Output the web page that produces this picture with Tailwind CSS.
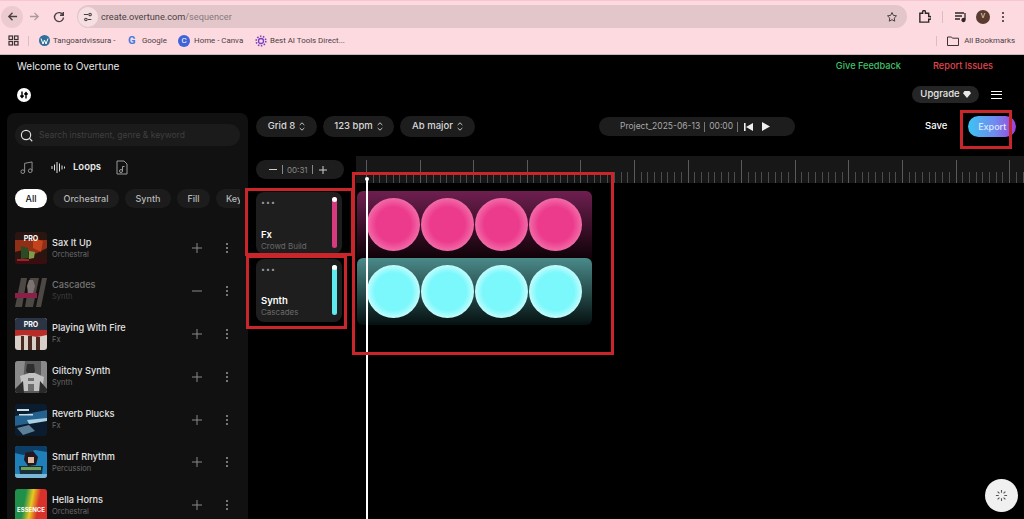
<!doctype html>
<html lang="en">
  <head>
    <title>Overtune sequencer</title>
    <meta charset="UTF-8" />
    <meta name="viewport" content="width=device-width, initial-scale=1" />
    <script src="https://cdn.jsdelivr.net/npm/@tailwindcss/browser@4"></script>
  </head>
  <body class="bg-black">
    <div class="relative w-[1024px] h-[519px] overflow-hidden bg-black text-white font-['Inter',sans-serif]">
      <!-- browser chrome -->
      <div class="h-[55px] bg-[#fddae0] border-t border-b border-t-[#f9c5d1] border-b-[#c9b4b8] font-['Roboto',sans-serif] text-[#4a4044]">
        <div class="h-[31px] flex items-center">
          <div class="ml-[1px] w-[22px] h-[22px] rounded-full bg-[#eccbd0] flex items-center justify-center">
            <svg class="w-[11px] h-[11px]" viewBox="0 0 12 12" fill="none" stroke="#4a4044" stroke-width="1.5"><path d="M11 6H2M6 2 2 6l4 4"/></svg>
          </div>
          <svg class="ml-[6px] w-[11px] h-[11px]" viewBox="0 0 12 12" fill="none" stroke="#a89a9e" stroke-width="1.4"><path d="M1 6h9M6 2l4 4-4 4"/></svg>
          <svg class="ml-[13px] w-[12px] h-[12px]" viewBox="0 0 12 12" fill="none" stroke="#4a4044" stroke-width="1.4"><path d="M10 4a4.500 4.500 0 1 0 .5 2.500M10.300 1v3.300H7"/></svg>
          <div class="ml-[12px] w-[830px] h-[23px] rounded-full bg-[#e3c6ca] flex items-center">
            <div class="ml-[1px] w-[20px] h-[20px] rounded-full bg-[#f5dfe2] flex items-center justify-center">
              <svg class="w-[10px] h-[10px]" viewBox="0 0 12 12" fill="none" stroke="#4a4044" stroke-width="1.300"><path d="M1 3h5M10 9H6"/><circle cx="8.500" cy="3" r="1.500"/><circle cx="3.500" cy="9" r="1.500"/></svg>
            </div>
            <span class="ml-[3px] text-[9.200px]">create.overtune.com<span class="text-[#85797d]">/sequencer</span></span>
            <svg class="ml-auto mr-[9px] w-[12px] h-[12px]" viewBox="0 0 24 24" fill="none" stroke="#4a4044" stroke-width="2"><path d="m12 3 2.800 5.800 6.200.9-4.500 4.400 1 6.300L12 17.400l-5.500 3 1-6.300L3 9.700l6.200-.9z"/></svg>
          </div>
          <svg class="ml-[11px] w-[13px] h-[13px]" viewBox="0 0 14 14" fill="none" stroke="#2c2629" stroke-width="1.500"><path d="M2 3.500h3V2a1.200 1.200 0 0 1 3 0v1.500h3.500V7H13a1.500 1.500 0 0 1 0 3h-1.500v3H2z"/></svg>
          <div class="ml-[11px] w-px h-[12px] bg-[#dcbcc2]"></div>
          <svg class="ml-[12px] w-[12px] h-[12px]" viewBox="0 0 12 12" fill="none" stroke="#2c2629" stroke-width="1.300"><path d="M0 2h9M0 5h7M0 8h5"/><path d="M10 2v6.500" /><circle cx="8.500" cy="9" r="1.500" fill="#2c2629"/></svg>
          <div class="ml-[9px] w-[14px] h-[14px] rounded-full bg-[#5b3a2e] text-[7px] text-[#f0e0d8] flex items-center justify-center">V</div>
          <div class="ml-[12px] flex flex-col gap-[2px]">
            <div class="w-[2px] h-[2px] rounded-full bg-[#2c2629]"></div>
            <div class="w-[2px] h-[2px] rounded-full bg-[#2c2629]"></div>
            <div class="w-[2px] h-[2px] rounded-full bg-[#2c2629]"></div>
          </div>
        </div>
        <div class="h-[22px] flex items-center text-[7.900px] pb-[5px]">
          <svg class="ml-[8px] w-[11px] h-[11px]" viewBox="0 0 11 11" fill="none" stroke="#3a3336" stroke-width="1.200"><rect x="1" y="1" width="3.500" height="3.500"/><rect x="6.500" y="1" width="3.500" height="3.500"/><rect x="1" y="6.500" width="3.500" height="3.500"/><rect x="6.500" y="6.500" width="3.500" height="3.500"/></svg>
          <div class="ml-[9px] w-px h-[10px] bg-[#dcbcc2]"></div>
          <svg class="ml-[10px] w-[11px] h-[11px]" viewBox="0 0 11 11"><circle cx="5.500" cy="5.500" r="5.500" fill="#2f6f9b"/><path d="M2 3.500 4 9l1.500-4L7 9l2-5.500" fill="none" stroke="#fff" stroke-width="1"/></svg>
          <span class="ml-[3px] w-[64px] whitespace-nowrap">Tangoardvissura -</span>
          <span class="ml-[11px] w-[10px] text-[11px] font-bold text-[#3f7de0] leading-none">G</span>
          <span class="ml-[4px] w-[27px]">Google</span>
          <div class="ml-[9px] w-[12px] h-[12px] rounded-full bg-[#3f63d8] text-[8px] text-white flex items-center justify-center">C</div>
          <span class="ml-[4px] w-[50px] whitespace-nowrap">Home - Canva</span>
          <svg class="ml-[11px] w-[12px] h-[12px]" viewBox="0 0 12 12" fill="none" stroke="#7a3fc0"><circle cx="6" cy="6" r="2.500" stroke-width="1.300"/><circle cx="6" cy="6" r="4.800" stroke-width="1.600" stroke-dasharray="1.500 1.500"/></svg>
          <span class="ml-[3px]">Best AI Tools Direct...</span>
          <div class="ml-auto w-px h-[10px] bg-[#dcbcc2]"></div>
          <svg class="ml-[10px] w-[12px] h-[10px]" viewBox="0 0 12 10" fill="none" stroke="#3a3336"><path d="M.500 1h4l1 1.200h6v7.300H.500z"/></svg>
          <span class="ml-[5px] mr-[9px]">All Bookmarks</span>
        </div>
      </div>

      <!-- page header -->
      <div class="h-[22px] flex items-center text-[9.200px] font-medium">
        <span class="ml-[17px] text-[10px] text-[#e8e8e8] font-normal">Welcome to Overtune</span>
        <span class="ml-auto text-[#3fc46b]">Give Feedback</span>
        <span class="ml-[32px] mr-[31px] text-[#e0474f]">Report Issues</span>
      </div>
      <div class="h-[35px] flex items-center">
        <svg class="ml-[17px] w-[14px] h-[14px]" viewBox="0 0 14 14"><circle cx="7" cy="7" r="7" fill="#fff"/><path d="M5 3.500v6M3.400 7.500 5 9.500l1.600-2M9 10.500v-6M7.400 6.500 9 4.500l1.600 2" fill="none" stroke="#000" stroke-width="1.400"/></svg>
        <div class="ml-auto h-[17px] w-[67px] rounded-full bg-[#252525] flex items-center justify-center gap-[3px] text-[9.500px] font-medium text-[#e8e8e8]">
          Upgrade
          <svg class="w-[8px] h-[7px]" viewBox="0 0 8 7" fill="#e8e8e8"><path d="M1.500 0h5L8 2.200 4 7 0 2.200z"/></svg>
        </div>
        <div class="ml-[12px] mr-[22px] w-[11px] flex flex-col gap-[2.500px]">
          <div class="h-px bg-white"></div>
          <div class="h-px bg-white"></div>
          <div class="h-px bg-white"></div>
        </div>
      </div>

      <div class="flex mt-[1px]">
        <!-- sidebar -->
        <aside class="ml-[7px] w-[241px] h-[420px] rounded-t-lg bg-[#111111] px-[8px] pt-[11px] shrink-0">
          <div class="h-[22px] rounded-full bg-[#1b1b1b] flex items-center">
            <svg class="ml-[5px] w-[13px] h-[13px]" viewBox="0 0 14 14" fill="none" stroke="#e5e5e5" stroke-width="1.200"><circle cx="6.500" cy="6.500" r="5"/><path d="m10.200 10.200 3 3"/></svg>
            <span class="ml-[6px] text-[8.500px] text-[#3f3f3f]">Search instrument, genre &amp; keyword</span>
          </div>
          <div class="h-[20px] mt-[11px] flex items-center text-[9.500px] font-semibold text-[#e8e8e8]">
            <svg class="ml-[5px] w-[13px] h-[13px]" viewBox="0 0 14 14" fill="none" stroke="#9a9a9a" stroke-width="1"><circle cx="3" cy="11.500" r="2"/><circle cx="11" cy="10.500" r="2"/><path d="M5 11.500V2.500L13 1v9.500"/></svg>
            <svg class="ml-[18px] w-[15px] h-[13px]" viewBox="0 0 15 13" stroke="#e0e0e0" stroke-width="1"><path d="M1 5v3M3.500 3.500v6M6 1v11M8.500 2.500v8M11 4.500v4M13.500 5.500v2"/></svg>
            <span class="ml-[7px]">Loops</span>
            <svg class="ml-[15px] w-[12px] h-[15px]" viewBox="0 0 12 15" fill="none" stroke="#9a9a9a" stroke-width="1"><path d="M1 1h7l3 3v10H1z"/><circle cx="5" cy="11" r="1.500"/><path d="M6.500 11V6.500h2"/></svg>
          </div>
          <div class="mt-[12px] flex gap-[6px] overflow-hidden text-[9px] font-medium h-[19px] items-stretch w-[225px]">
            <div class="w-[32px] rounded-full bg-white text-[#111] flex items-center justify-center shrink-0">All</div>
            <div class="w-[66px] rounded-full bg-[#1c1c1c] text-[#b8b8b8] flex items-center justify-center shrink-0">Orchestral</div>
            <div class="w-[46px] rounded-full bg-[#1c1c1c] text-[#b8b8b8] flex items-center justify-center shrink-0">Synth</div>
            <div class="w-[33px] rounded-full bg-[#1c1c1c] text-[#b8b8b8] flex items-center justify-center shrink-0">Fill</div>
            <div class="w-[50px] rounded-full bg-[#1c1c1c] text-[#b8b8b8] pl-[10px] flex items-center shrink-0">Keys</div>
          </div>

          <div class="mt-[24px] flex flex-col gap-[10.900px]">
            <div class="h-[32px] flex items-center">
              <div class="relative w-[32px] h-[32px] rounded-[3px] overflow-hidden shrink-0">
                <svg class="w-full h-full" viewBox="0 0 32 32"><rect width="32" height="32" fill="#2a1510"/><path d="M0 8h32v8L20 22 8 18 0 20z" fill="#8e2f16"/><path d="M18 6l10 3-2 11-8-4z" fill="#c2431c"/><path d="M6 14l7 2 1 10-8 1z" fill="#2c4a24"/><path d="M14 19l6 1-1 6-5 1z" fill="#7f9a4a"/><path d="M0 27h32v5H0z" fill="#3a0d10"/><path d="M2 27h12v2H2z" fill="#a3202a"/></svg>
                <span class="absolute inset-x-0 top-[2px] text-center text-[7px] font-bold text-white">PRO</span>
              </div>
              <div class="ml-[5px] flex flex-col gap-[2px]">
                <span class="text-[9.200px] leading-[11px] font-medium text-[#e5e5e5]">Sax It Up</span>
                <span class="text-[7.500px] leading-[10px] text-[#6a6a6a]">Orchestral</span>
              </div>
              <svg class="ml-auto w-[10px] h-[10px]" viewBox="0 0 10 10" stroke="#8a8a8a"><path d="M5 0v10M0 5h10"/></svg>
              <div class="ml-[24px] mr-[12px] flex flex-col gap-[2px]">
                <div class="w-[2px] h-[2px] bg-[#9a9a9a] rounded-full"></div><div class="w-[2px] h-[2px] bg-[#9a9a9a] rounded-full"></div><div class="w-[2px] h-[2px] bg-[#9a9a9a] rounded-full"></div>
              </div>
            </div>
            <div class="h-[32px] flex items-center">
              <div class="w-[32px] h-[32px] overflow-hidden shrink-0">
                <svg class="w-full h-full" viewBox="0 0 32 32"><path d="M6 3h26l-6 29H0z" fill="#4e4845"/><path d="M12 3l-5 29h3L15 3zM24 3l-6 29h3L27 3z" fill="#111"/><path d="M14 5l4 0 2 6-2 7h-5l-1-7z" fill="#7a7370"/><path d="M0 18h22v5H0z" fill="#8c1f48"/></svg>
              </div>
              <div class="ml-[5px] flex flex-col gap-[2px]">
                <span class="text-[9.200px] leading-[11px] font-medium text-[#757575]">Cascades</span>
                <span class="text-[7.500px] leading-[10px] text-[#3f3f3f]">Synth</span>
              </div>
              <svg class="ml-auto w-[10px] h-[10px]" viewBox="0 0 10 10" stroke="#8a8a8a"><path d="M0 5h10"/></svg>
              <div class="ml-[24px] mr-[12px] flex flex-col gap-[2px]">
                <div class="w-[2px] h-[2px] bg-[#9a9a9a] rounded-full"></div><div class="w-[2px] h-[2px] bg-[#9a9a9a] rounded-full"></div><div class="w-[2px] h-[2px] bg-[#9a9a9a] rounded-full"></div>
              </div>
            </div>
            <div class="h-[32px] flex items-center">
              <div class="relative w-[32px] h-[32px] rounded-[3px] overflow-hidden shrink-0">
                <svg class="w-full h-full" viewBox="0 0 32 32"><rect width="32" height="32" fill="#d8cfc8"/><path d="M0 0h32v12H0z" fill="#2a3444"/><path d="M0 12h32v5l-10 2-12-2-10 1z" fill="#b82c28"/><path d="M6 18h3v14H6zM13 18h4v14h-4zM21 19h4v13h-4z" fill="#4a2a20"/></svg>
                <span class="absolute inset-x-0 top-[2px] text-center text-[7px] font-bold text-white">PRO</span>
              </div>
              <div class="ml-[5px] flex flex-col gap-[2px]">
                <span class="text-[9.200px] leading-[11px] font-medium text-[#e5e5e5]">Playing With Fire</span>
                <span class="text-[7.500px] leading-[10px] text-[#6a6a6a]">Fx</span>
              </div>
              <svg class="ml-auto w-[10px] h-[10px]" viewBox="0 0 10 10" stroke="#8a8a8a"><path d="M5 0v10M0 5h10"/></svg>
              <div class="ml-[24px] mr-[12px] flex flex-col gap-[2px]">
                <div class="w-[2px] h-[2px] bg-[#9a9a9a] rounded-full"></div><div class="w-[2px] h-[2px] bg-[#9a9a9a] rounded-full"></div><div class="w-[2px] h-[2px] bg-[#9a9a9a] rounded-full"></div>
              </div>
            </div>
            <div class="h-[32px] flex items-center">
              <div class="w-[32px] h-[32px] rounded-[3px] overflow-hidden shrink-0">
                <svg class="w-full h-full" viewBox="0 0 32 32"><rect width="32" height="32" fill="#5a5a5a"/><path d="M0 0h10l-3 32H0zM26 0h6v32h-6z" fill="#8a8a8a"/><path d="M12 3h7l1 7-2 3h-5l-2-3z" fill="#2e2e2e"/><path d="M5 15l9-3h6l9 4-2 14H8z" fill="#c2c2c2"/><path d="M13 17h6v3h-6zM13 23h6v7h-6z" fill="#6e6e6e"/><path d="M0 28l8-8 1 12H0zM32 28l-7-8-1 12h8z" fill="#2a2a2a"/></svg>
              </div>
              <div class="ml-[5px] flex flex-col gap-[2px]">
                <span class="text-[9.200px] leading-[11px] font-medium text-[#e5e5e5]">Glitchy Synth</span>
                <span class="text-[7.500px] leading-[10px] text-[#6a6a6a]">Synth</span>
              </div>
              <svg class="ml-auto w-[10px] h-[10px]" viewBox="0 0 10 10" stroke="#8a8a8a"><path d="M5 0v10M0 5h10"/></svg>
              <div class="ml-[24px] mr-[12px] flex flex-col gap-[2px]">
                <div class="w-[2px] h-[2px] bg-[#9a9a9a] rounded-full"></div><div class="w-[2px] h-[2px] bg-[#9a9a9a] rounded-full"></div><div class="w-[2px] h-[2px] bg-[#9a9a9a] rounded-full"></div>
              </div>
            </div>
            <div class="h-[32px] flex items-center">
              <div class="w-[32px] h-[32px] rounded-[3px] overflow-hidden shrink-0">
                <svg class="w-full h-full" viewBox="0 0 32 32"><rect width="32" height="32" fill="#0b1c2e"/><path d="M0 12 32 6v10L0 22z" fill="#25618e"/><path d="M2 5h12v2H2zM4 10h14v1.500H4z" fill="#c8dce8"/><path d="M12 16l20-2v3L14 20z" fill="#a8cfe2"/><path d="M2 24l12-3 6 6-12 4z" fill="#5a7f96"/></svg>
              </div>
              <div class="ml-[5px] flex flex-col gap-[2px]">
                <span class="text-[9.200px] leading-[11px] font-medium text-[#e5e5e5]">Reverb Plucks</span>
                <span class="text-[7.500px] leading-[10px] text-[#6a6a6a]">Fx</span>
              </div>
              <svg class="ml-auto w-[10px] h-[10px]" viewBox="0 0 10 10" stroke="#8a8a8a"><path d="M5 0v10M0 5h10"/></svg>
              <div class="ml-[24px] mr-[12px] flex flex-col gap-[2px]">
                <div class="w-[2px] h-[2px] bg-[#9a9a9a] rounded-full"></div><div class="w-[2px] h-[2px] bg-[#9a9a9a] rounded-full"></div><div class="w-[2px] h-[2px] bg-[#9a9a9a] rounded-full"></div>
              </div>
            </div>
            <div class="h-[32px] flex items-center">
              <div class="w-[32px] h-[32px] rounded-[3px] overflow-hidden shrink-0">
                <svg class="w-full h-full" viewBox="0 0 32 32"><rect width="32" height="32" fill="#1f7fb8"/><path d="M0 0h32v6L20 4 8 9 0 7z" fill="#0d3f66"/><path d="M10 7l8-2 5 6-2 8-8 1-4-6z" fill="#241820"/><path d="M13 11h6v6h-6z" fill="#e0b8a0"/><path d="M4 20h24l-1 8H5z" fill="#18303a"/><path d="M6 21h20v3H6z" fill="#6fa05a"/><path d="M0 28h32v4H0z" fill="#7ab8d8"/></svg>
              </div>
              <div class="ml-[5px] flex flex-col gap-[2px]">
                <span class="text-[9.200px] leading-[11px] font-medium text-[#e5e5e5]">Smurf Rhythm</span>
                <span class="text-[7.500px] leading-[10px] text-[#6a6a6a]">Percussion</span>
              </div>
              <svg class="ml-auto w-[10px] h-[10px]" viewBox="0 0 10 10" stroke="#8a8a8a"><path d="M5 0v10M0 5h10"/></svg>
              <div class="ml-[24px] mr-[12px] flex flex-col gap-[2px]">
                <div class="w-[2px] h-[2px] bg-[#9a9a9a] rounded-full"></div><div class="w-[2px] h-[2px] bg-[#9a9a9a] rounded-full"></div><div class="w-[2px] h-[2px] bg-[#9a9a9a] rounded-full"></div>
              </div>
            </div>
            <div class="h-[32px] flex items-center">
              <div class="w-[32px] h-[32px] rounded-[3px] overflow-hidden bg-[linear-gradient(100deg,#1f8f4a_30%,#e8c820_50%,#d8302a_70%)] shrink-0 flex flex-col items-center justify-end">
                <span class="mb-[7px] text-[6px] leading-[9px] font-bold text-white">ESSENCE</span>
              </div>
              <div class="ml-[5px] flex flex-col gap-[2px]">
                <span class="text-[9.200px] leading-[11px] font-medium text-[#e5e5e5]">Hella Horns</span>
                <span class="text-[7.500px] leading-[10px] text-[#6a6a6a]">Orchestral</span>
              </div>
              <svg class="ml-auto w-[10px] h-[10px]" viewBox="0 0 10 10" stroke="#8a8a8a"><path d="M5 0v10M0 5h10"/></svg>
              <div class="ml-[24px] mr-[12px] flex flex-col gap-[2px]">
                <div class="w-[2px] h-[2px] bg-[#9a9a9a] rounded-full"></div><div class="w-[2px] h-[2px] bg-[#9a9a9a] rounded-full"></div><div class="w-[2px] h-[2px] bg-[#9a9a9a] rounded-full"></div>
              </div>
            </div>
          </div>
        </aside>

        <!-- sequencer -->
        <main class="ml-[8px] flex-1 min-w-0">
          <div class="mt-[3px] h-[21px] flex items-center text-[9.500px] font-medium text-[#d8d8d8]">
            <div class="w-[61px] h-[21px] rounded-full bg-[#1d1d1d] flex items-center justify-center gap-[4px]">Grid 8
              <svg class="w-[6px] h-[9px]" viewBox="0 0 6 9" fill="none" stroke="#d8d8d8" stroke-width=".9"><path d="M.7 3 3 .8 5.300 3M.7 6 3 8.200 5.300 6"/></svg>
            </div>
            <div class="ml-[6px] w-[71px] h-[21px] rounded-full bg-[#1d1d1d] flex items-center justify-center gap-[4px]">123 bpm
              <svg class="w-[6px] h-[9px]" viewBox="0 0 6 9" fill="none" stroke="#d8d8d8" stroke-width=".9"><path d="M.7 3 3 .8 5.300 3M.7 6 3 8.200 5.300 6"/></svg>
            </div>
            <div class="ml-[6px] w-[75px] h-[21px] rounded-full bg-[#1d1d1d] flex items-center justify-center gap-[4px]">Ab major
              <svg class="w-[6px] h-[9px]" viewBox="0 0 6 9" fill="none" stroke="#d8d8d8" stroke-width=".9"><path d="M.7 3 3 .8 5.300 3M.7 6 3 8.200 5.300 6"/></svg>
            </div>
            <div class="ml-[124px] w-[196px] h-[19px] rounded-full bg-[#1d1d1d] flex items-center text-[8.500px] font-normal text-[#a8a8a8]">
              <span class="ml-[21px]">Project_2025-06-13</span>
              <span class="mx-[4px] w-px h-[10px] bg-[#777]"></span>
              <span>00:00</span>
              <span class="mx-[4px] w-px h-[10px] bg-[#777]"></span>
              <svg class="ml-[2px] w-[9px] h-[8px]" viewBox="0 0 9 8" fill="#eee"><path d="M0 0h1.600v8H0zM9 0v8L2 4z"/></svg>
              <svg class="ml-[9px] w-[8px] h-[9px]" viewBox="0 0 8 9" fill="#eee"><path d="M0 0l8 4.500L0 9z"/></svg>
            </div>
            <span class="ml-[130px] text-white">Save</span>
            <div class="ml-[21px] w-[48px] h-[21px] rounded-full bg-[linear-gradient(90deg,#3cc4f5,#6f8cf0_55%,#a040d8)] flex items-center justify-center text-[9px] text-[#dfe8ff]">Export</div>
          </div>

          <div class="relative mt-[19px] flex">
            <!-- track column -->
            <div class="w-[100px] shrink-0">
              <div class="mt-[4px] w-[88px] h-[19px] rounded-full bg-[#1d1d1d] flex items-center text-[8px] text-[#8a8a8a]">
                <span class="ml-[13px] w-[8px] h-px bg-[#cfcfcf]"></span>
                <span class="ml-[5px] w-px h-[9px] bg-[#888]"></span>
                <span class="ml-[4px]">00:31</span>
                <span class="ml-[4px] w-px h-[9px] bg-[#888]"></span>
                <svg class="ml-[6px] w-[8px] h-[8px]" viewBox="0 0 8 8" stroke="#cfcfcf"><path d="M4 0v8M0 4h8"/></svg>
              </div>
              <div class="mt-[13px] w-[86px] h-[62px] rounded-lg bg-[#1e1e1e] flex pl-[5px] pr-[5px]">
                <div class="flex-1 flex flex-col">
                  <span class="mt-[7px] text-[7px] leading-[7px] tracking-[1px] text-[#9a9a9a]">•••</span>
                  <span class="mt-auto text-[9.500px] leading-[11px] font-semibold">Fx</span>
                  <span class="mb-[3px] mt-[1px] text-[8px] leading-[10px] text-[#6a6a6a]">Crowd Build</span>
                </div>
                <div class="mt-[5px] w-[5px] h-[51px] rounded-full bg-[#d83a80]">
                  <div class="w-[5px] h-[5px] rounded-full bg-white"></div>
                </div>
              </div>
              <div class="mt-[5px] w-[86px] h-[63px] rounded-lg bg-[#1e1e1e] flex pl-[5px] pr-[5px]">
                <div class="flex-1 flex flex-col">
                  <span class="mt-[7px] text-[7px] leading-[7px] tracking-[1px] text-[#9a9a9a]">•••</span>
                  <span class="mt-auto text-[9.500px] leading-[11px] font-semibold">Synth</span>
                  <span class="mb-[5px] mt-[1px] text-[8px] leading-[10px] text-[#6a6a6a]">Cascades</span>
                </div>
                <div class="mt-[6px] w-[5px] h-[50px] rounded-full bg-[#5ee9ee]">
                  <div class="w-[5px] h-[5px] rounded-full bg-white"></div>
                </div>
              </div>
            </div>
            <!-- timeline -->
            <div class="flex-1 min-w-0">
              <div class="h-[27px] bg-[#171717] pl-[10px]">
                <div class="h-full bg-no-repeat bg-bottom [background-image:repeating-linear-gradient(90deg,#5a5a5a_0_1px,transparent_1px_53.600px),repeating-linear-gradient(90deg,#4c4c4c_0_1px,transparent_1px_6.700px)] [background-size:100%_23px,100%_11px]"></div>
              </div>
              <div class="mt-[8px] ml-[1px] w-[235px]">
                <div class="h-[67px] rounded-t-md bg-[linear-gradient(180deg,#6e1f50,#100208)] flex items-center gap-[1px] pl-[10px] pb-[1px]">
                  <div class="w-[53px] h-[53px] rounded-full bg-[radial-gradient(circle,#ec3a8c_46%,#f26ca8_71%)]"></div>
                  <div class="w-[53px] h-[53px] rounded-full bg-[radial-gradient(circle,#ec3a8c_46%,#f26ca8_71%)]"></div>
                  <div class="w-[53px] h-[53px] rounded-full bg-[radial-gradient(circle,#ec3a8c_46%,#f26ca8_71%)]"></div>
                  <div class="w-[53px] h-[53px] rounded-full bg-[radial-gradient(circle,#ec3a8c_46%,#f26ca8_71%)]"></div>
                </div>
                <div class="h-[67px] rounded-md bg-[linear-gradient(180deg,#4b8a8a,#051010)] flex items-center gap-[1px] pl-[10px]">
                  <div class="w-[53px] h-[53px] rounded-full bg-[radial-gradient(circle,#7af8fb_50%,#c4fcfd_71%)]"></div>
                  <div class="w-[53px] h-[53px] rounded-full bg-[radial-gradient(circle,#7af8fb_50%,#c4fcfd_71%)]"></div>
                  <div class="w-[53px] h-[53px] rounded-full bg-[radial-gradient(circle,#7af8fb_50%,#c4fcfd_71%)]"></div>
                  <div class="w-[53px] h-[53px] rounded-full bg-[radial-gradient(circle,#7af8fb_50%,#c4fcfd_71%)]"></div>
                </div>
              </div>
            </div>
          </div>
        </main>
      </div>

      <!-- playhead -->
      <div class="absolute left-[366px] top-[179px] bottom-0 w-[1.500px] bg-white"></div>
      <div class="absolute left-[364.500px] top-[177px] w-[4px] h-[4px] rounded-full bg-white"></div>

      <!-- loading badge -->
      <div class="absolute left-[985px] top-[479px] w-[33px] h-[33px] rounded-full bg-[#f0f0f0] flex items-center justify-center">
        <svg class="w-[13px] h-[13px]" viewBox="0 0 14 14" stroke="#555" stroke-width="1.200"><path d="M7 1v3M7 10v3M1 7h3M10 7h3M2.800 2.800l2 2M9.200 9.200l2 2M11.200 2.800l-2 2M4.800 9.200l-2 2"/></svg>
      </div>

      <!-- red annotation boxes -->
      <div class="absolute left-[960px] top-[110px] w-[52px] h-[39px] border-[3px] border-[#c9252b]"></div>
      <div class="absolute left-[245px] top-[188px] w-[109px] h-[68px] border-[3px] border-[#c9252b]"></div>
      <div class="absolute left-[246px] top-[255px] w-[101px] h-[74px] border-[3px] border-[#c9252b]"></div>
      <div class="absolute left-[352px] top-[172px] w-[262px] h-[183px] border-[3px] border-[#c9252b]"></div>
    </div>
  </body>
</html>
